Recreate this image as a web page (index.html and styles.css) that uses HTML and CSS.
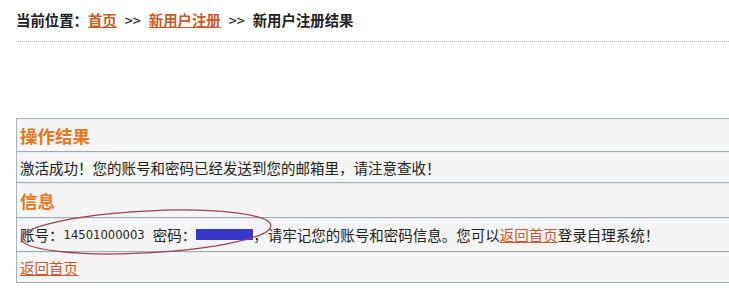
FILE: index.html
```html
<!DOCTYPE html>
<html lang="zh">
<head>
<meta charset="utf-8">
<title>新用户注册结果</title>
<link rel="stylesheet" href="styles.css">
</head>
<body>
<div class="page">
  <div class="crumb">当前位置：<a href="#">首页</a><span class="sep">&gt;&gt;</span><a href="#">新用户注册</a><span class="sep">&gt;&gt;</span>新用户注册结果</div>
  <div class="panel">
    <div class="row head">操作结果</div>
    <div class="row">激活成功！您的账号和密码已经发送到您的邮箱里，请注意查收！</div>
    <div class="row head">信息</div>
    <div class="row">账号：<span class="num">14501000003</span>密码：<span class="mask"></span>，请牢记您的账号和密码信息。您可以<a href="#">返回首页</a>登录自理系统！</div>
    <div class="row"><a href="#">返回首页</a></div>
  </div>
  <svg class="circle" width="270" height="56" viewBox="0 0 270 56" aria-hidden="true">
    <ellipse cx="134" cy="28" rx="125" ry="21" transform="rotate(-3 134 28)" fill="none" stroke="#a3404c" stroke-width="1.3"/>
  </svg>
</div>
</body>
</html>
```
FILE: styles.css
```css
html, body {
  margin: 0;
  padding: 0;
  background: #ffffff;
  overflow: hidden;
}
.page {
  position: relative;
  width: 729px;
  height: 302px;
  font-family: "Noto Sans CJK SC", "DejaVu Sans", sans-serif;
  color: #222222;
  font-size: 14px;
}
a {
  color: #cc5a28;
  text-decoration: underline;
}
.crumb {
  margin-left: 16px;
  padding-top: 10px;
  padding-bottom: 11px;
  line-height: 20px;
  font-size: 14.4px;
  font-weight: bold;
  color: #222;
  border-bottom: 1px dotted #b8b8b8;
}
.sep {
  margin: 0 8px;
  font-weight: normal;
}
.panel {
  margin-top: 76px;
  margin-left: 16px;
  width: 740px;
  border-left: 1px solid #a6b2be;
  border-top: 1px solid #a6b2be;
  background: #f5f5f5;
}
.row {
  display: flex;
  align-items: center;
  height: 30px;
  padding-left: 3px;
  border-bottom: 1px solid #9eabb9;
  box-shadow: inset 0 1px 0 #e6ebf0;
  font-size: 14.5px;
  white-space: nowrap;
}
.row.head {
  height: 32px;
  font-size: 17.5px;
  font-weight: bold;
  color: #e8761c;
}
.row:nth-child(3) {
  height: 34px;
}
.row:nth-child(4) {
  height: 33px;
}
.num {
  font-family: "DejaVu Sans", sans-serif;
  font-size: 11.6px;
  margin-right: 8px;
}
.mask {
  display: inline-block;
  width: 57px;
  height: 11px;
  background: #3538c8;
}
.circle {
  position: absolute;
  left: 12px;
  top: 204px;
}
```
